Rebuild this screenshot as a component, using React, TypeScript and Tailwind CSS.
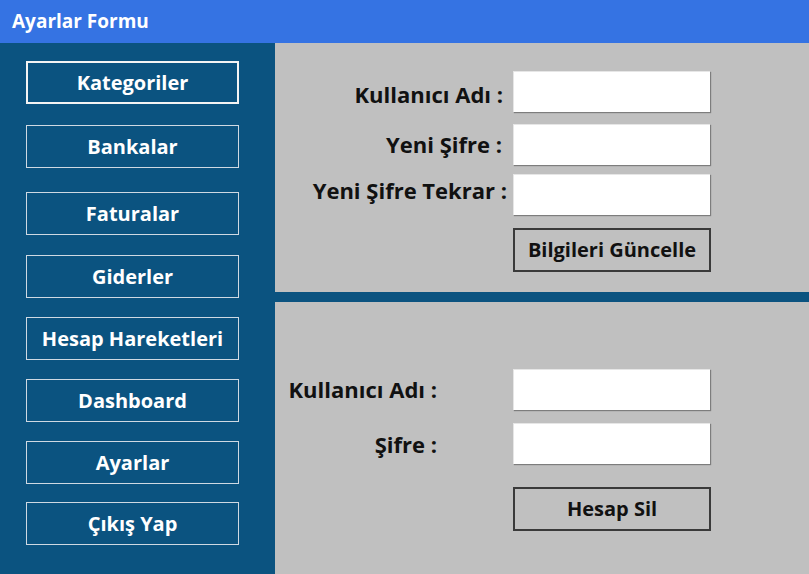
import React from "react";

const navItems: { label: string; mt: string; active?: boolean }[] = [
  { label: "Kategoriler", mt: "mt-[18px]", active: true },
  { label: "Bankalar", mt: "mt-[21px]" },
  { label: "Faturalar", mt: "mt-[24px]" },
  { label: "Giderler", mt: "mt-[20px]" },
  { label: "Hesap Hareketleri", mt: "mt-[19px]" },
  { label: "Dashboard", mt: "mt-[19px]" },
  { label: "Ayarlar", mt: "mt-[19px]" },
  { label: "Çıkış Yap", mt: "mt-[18px]" },
];

function Input() {
  return (
    <div className="w-[197px] h-[41px] bg-white border-t border-l border-[#e6e6e6] shadow-[1px_1px_1px_rgba(0,0,0,0.35)]" />
  );
}

export default function App() {
  return (
    <div
      className="w-[809px] h-[574px] flex flex-col overflow-hidden"
      style={{ fontFamily: "'Open Sans', Lato, sans-serif" }}
    >
      <div className="h-[43px] bg-[#3573e3] flex items-center pl-[12px] shrink-0">
        <span className="text-white font-bold text-[19px] leading-none">Ayarlar Formu</span>
      </div>
      <div className="flex flex-1 min-h-0">
        <div className="w-[275px] bg-[#0b5380] flex flex-col pl-[26px] shrink-0">
          {navItems.map((n) => (
            <div
              key={n.label}
              className={`${n.mt} w-[213px] h-[43px] flex items-center justify-center text-white font-bold text-[20px] leading-none ${
                n.active ? "border-2 border-[#f4f4f4]" : "border border-[#cfd9e3]"
              }`}
            >
              {n.label}
            </div>
          ))}
        </div>
        <div className="flex-1 flex flex-col bg-[#c0c0c0]">
          <div className="h-[249px] shrink-0 pt-[28px] flex flex-col">
            <div className="flex items-center h-[41px]">
              <div className="w-[238px] text-right pr-[10px] text-[22px] font-bold text-[#111] leading-none mt-[4px]">Kullanıcı Adı :</div>
              <Input />
            </div>
            <div className="flex items-center h-[42px] mt-[11px]">
              <div className="w-[238px] text-right pr-[11px] text-[22px] font-bold text-[#111] leading-none">Yeni Şifre :</div>
              <Input />
            </div>
            <div className="flex items-center h-[42px] mt-[8px]">
              <div className="w-[238px] text-right pr-[6px] text-[22px] font-bold text-[#111] leading-none mb-[8px]">Yeni Şifre Tekrar :</div>
              <Input />
            </div>
            <div className="flex mt-[13px]">
              <div className="w-[238px]" />
              <div className="w-[198px] h-[44px] border-2 border-[#3a3a3a] flex items-center justify-center text-[20px] font-bold text-[#111] leading-none">
                Bilgileri Güncelle
              </div>
            </div>
          </div>
          <div className="h-[10px] bg-[#0b5380] shrink-0" />
          <div className="flex-1 flex flex-col pt-[66px]">
            <div className="flex items-center h-[42px]">
              <div className="w-[238px] pl-[12px] text-[22px] font-bold text-[#111] leading-none">
                <span className="inline-block w-[150px] text-right whitespace-nowrap">Kullanıcı Adı :</span>
              </div>
              <Input />
            </div>
            <div className="flex items-center h-[41px] mt-[13px]">
              <div className="w-[238px] pl-[12px] text-[22px] font-bold text-[#111] leading-none">
                <span className="inline-block w-[150px] text-right whitespace-nowrap">Şifre :</span>
              </div>
              <Input />
            </div>
            <div className="flex mt-[23px]">
              <div className="w-[238px]" />
              <div className="w-[198px] h-[44px] border-2 border-[#3a3a3a] flex items-center justify-center text-[20px] font-bold text-[#111] leading-none">
                Hesap Sil
              </div>
            </div>
          </div>
        </div>
      </div>
    </div>
  );
}
